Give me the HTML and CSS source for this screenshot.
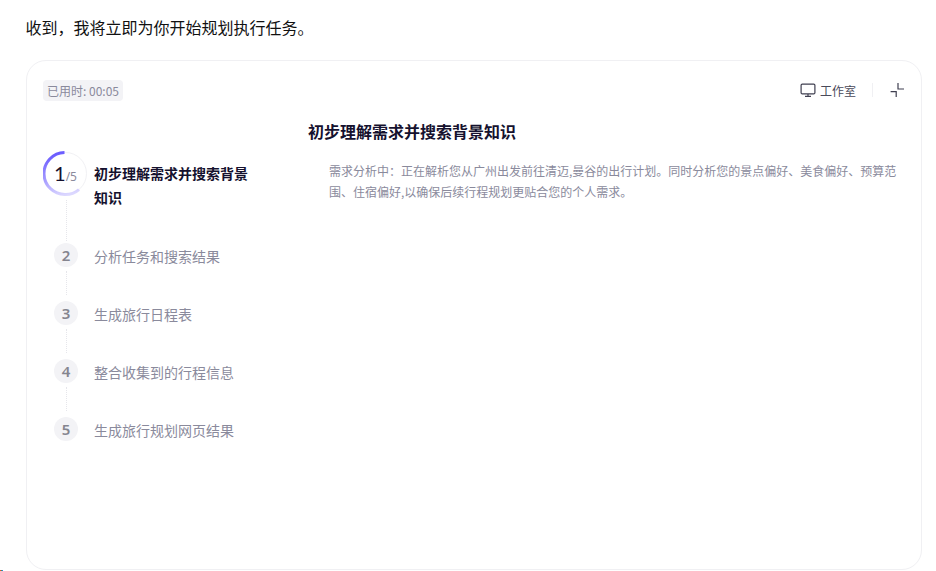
FILE: index.html
```html
<!DOCTYPE html>
<html lang="zh-CN">
<head>
<meta charset="utf-8">
<title>任务</title>
<link rel="stylesheet" href="styles.css">
</head>
<body>
<p class="intro">收到，我将立即为你开始规划执行任务。</p>
<section class="card">
  <header class="top">
    <span class="timer">已用时: 00:05</span>
    <div class="tools">
      <span class="studio">
        <svg class="monitor" width="16" height="16" viewBox="0 0 16 16" fill="none" stroke="#3f3f50" stroke-width="1.2"><rect x="1.1" y="2.1" width="13.8" height="9.8" rx="1.2"/><path d="M5 14.4h6M8 12v2.4"/></svg>
        工作室
      </span>
      <span class="sep"></span>
      <svg class="collapse" width="16" height="16" viewBox="0 0 16 16" fill="none" stroke="#3f3f50" stroke-width="1.2"><path d="M9 1v6h6M1.6 9.6h5.6V15"/></svg>
    </div>
  </header>
  <div class="main">
    <ol class="steps">
      <li class="step active">
        <div class="ring">
          <svg class="ring-svg" width="45" height="45" viewBox="0 0 45 45" fill="none">
            <defs>
              <linearGradient id="g" x1="0.5" y1="0" x2="0.7" y2="1">
                <stop offset="0" stop-color="#6b5cff"/>
                <stop offset="0.55" stop-color="#a79dff"/>
                <stop offset="1" stop-color="#dcd8ff"/>
              </linearGradient>
            </defs>
            <circle cx="22.5" cy="22.5" r="21" stroke="#f1f1f4" stroke-width="1"/>
            <path d="M21.5 1.5A21 21 0 0 0 22.5 43.5A21 21 0 0 0 36 38.6" stroke="url(#g)" stroke-width="3"/>
          </svg>
          <span class="num-big">1</span><span class="num-small">/5</span>
        </div>
        <span class="label">初步理解需求并搜索背景知识</span>
      </li>
      <li class="step"><span class="badge">2</span><span class="label">分析任务和搜索结果</span></li>
      <li class="step"><span class="badge">3</span><span class="label">生成旅行日程表</span></li>
      <li class="step"><span class="badge">4</span><span class="label">整合收集到的行程信息</span></li>
      <li class="step"><span class="badge">5</span><span class="label">生成旅行规划网页结果</span></li>
    </ol>
    <div class="detail">
      <h2 class="title">初步理解需求并搜索背景知识</h2>
      <p class="desc">需求分析中：正在解析您从广州出发前往清迈,曼谷的出行计划。同时分析您的景点偏好、美食偏好、预算范围、住宿偏好,以确保后续行程规划更贴合您的个人需求。</p>
    </div>
  </div>
</section>
<span class="corner-mark"></span>
</body>
</html>
```
FILE: styles.css
```css
* { box-sizing: border-box; }
html, body { height: 100%; }
body {
  margin: 0;
  padding: 15px 14px 0 26px;
  background: #fff;
  font-family: "Noto Sans CJK SC", "Noto Sans", sans-serif;
  color: #15112e;
  overflow: hidden;
  position: relative;
}
.intro { margin: 0 0 21px -0.5px; font-size: 16px; line-height: 24px; color: #111; }
.card {
  height: 510px;
  border: 1px solid #f0f0f3;
  border-radius: 20px;
  padding: 18px 16px 0;
  background: #fff;
}
.top { display: flex; justify-content: space-between; align-items: center; height: 22px; }
.timer {
  font-size: 12px; line-height: 21px; height: 21px; padding: 0 4px;
  background: #f3f3f6; border-radius: 4px; color: #8a8a9c;
}
.tools { display: flex; align-items: center; }
.studio { display: flex; align-items: center; gap: 4px; font-size: 12px; color: #4a4a5a; }
.sep { width: 1px; height: 14px; background: #f0f0f3; margin: 0 16px; }
.collapse { display: block; }
.main { display: flex; margin-top: 21px; }
.steps { list-style: none; margin: 29px 0 0; padding: 0; width: 265px; flex: none; }
.step { display: flex; position: relative; padding-left: 51px; min-height: 58px; }
.step.active { min-height: 92px; padding-top: 10px; }
.step:not(:last-child)::after {
  content: ""; position: absolute; left: 23px; top: 28px; bottom: 6px;
  border-left: 1px dotted #e6e6eb;
}
.step.active:not(:last-child)::after { top: 49px; bottom: 2px; }
.ring { position: absolute; left: 0; top: 0; width: 45px; height: 45px; display: flex; align-items: baseline; justify-content: center; padding-top: 8px; }
.ring-svg { position: absolute; left: 0; top: 0; }
.num-big { font-family: "Lato", sans-serif; font-size: 20px; line-height: 28px; color: #15112e; position: relative; }
.num-small { font-family: "Noto Sans", sans-serif; font-size: 12px; color: #8a8a9c; position: relative; }
.badge {
  position: absolute; left: 11px; top: 0; width: 24px; height: 24px; border-radius: 50%;
  background: #f3f3f6; color: #85858f; font-family: "Noto Sans", sans-serif; font-weight: 600; font-size: 15px;
  line-height: 24px; text-align: center;
}
.label { font-size: 14px; line-height: 24px; color: #8a8a9c; width: 160px; display: block; }
.step:not(.active) .label { padding-top: 1px; }
.active .label { color: #15112e; font-weight: 600; }
.detail { flex: 1; min-width: 0; margin-top: -3px; }
.title { margin: 0 0 17px; font-size: 16px; line-height: 24px; font-weight: 600; color: #15112e; }
.desc { margin: 0 0 0 21px; width: 572px; font-size: 12px; line-height: 21px; color: #8a8a9c; }
.corner-mark {
  position: absolute; left: 0; bottom: 0; width: 3px; height: 1px;
  background: linear-gradient(90deg, #e8443a 0 1px, #3aa655 1px 2px, #3a6ee8 2px 3px);
}
```
